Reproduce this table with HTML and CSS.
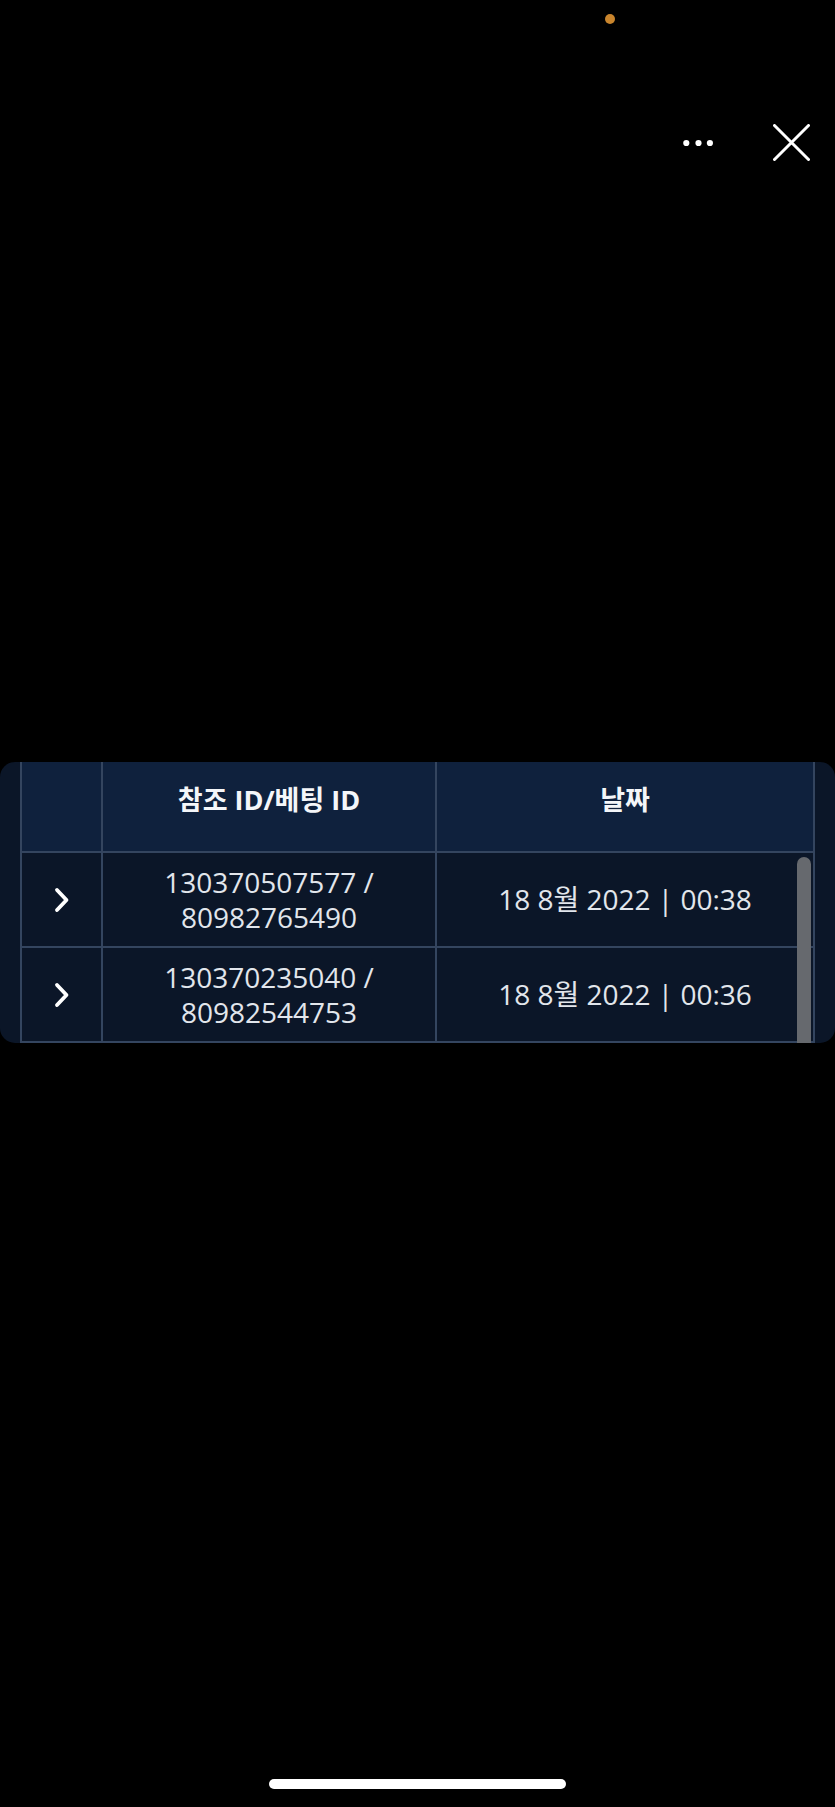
FILE: index.html
```html
<!DOCTYPE html>
<html lang="ko">
<head>
<meta charset="utf-8">
<title>베팅 내역</title>
<link rel="stylesheet" href="styles.css">
</head>
<body>
<div class="page">
  <div class="statusbar"><span class="rec-dot"></span></div>
  <div class="toolbar">
    <svg class="more" width="36" height="10" viewBox="0 0 36 10">
      <circle cx="6.3" cy="5" r="3.1" fill="#fff"/>
      <circle cx="18.5" cy="5" r="3.1" fill="#fff"/>
      <circle cx="29.9" cy="5" r="3.1" fill="#fff"/>
    </svg>
    <svg class="close" width="37" height="37" viewBox="0 0 37 37">
      <path d="M1.5 1.5 L35.5 35.5 M35.5 1.5 L1.5 35.5" stroke="#fff" stroke-width="3" stroke-linecap="round" fill="none"/>
    </svg>
  </div>

  <div class="panel">
    <div class="grid">
      <div class="cell head first"></div>
      <div class="cell head">참조 ID/베팅 ID</div>
      <div class="cell head last">날짜</div>

      <div class="cell first"><svg class="chev" width="16" height="26" viewBox="0 0 16 26"><path d="M3 3 L12.5 13 L3 23" stroke="#fff" stroke-width="3.8" stroke-linecap="round" stroke-linejoin="round" fill="none"/></svg></div>
      <div class="cell">130370507577 /<br>80982765490</div>
      <div class="cell last">18 8월 2022 | 00:38</div>

      <div class="cell first"><svg class="chev" width="16" height="26" viewBox="0 0 16 26"><path d="M3 3 L12.5 13 L3 23" stroke="#fff" stroke-width="3.8" stroke-linecap="round" stroke-linejoin="round" fill="none"/></svg></div>
      <div class="cell">130370235040 /<br>80982544753</div>
      <div class="cell last">18 8월 2022 | 00:36</div>
    </div>
    <div class="scrollbar"></div>
  </div>

  <div class="home-indicator"></div>
</div>
</body>
</html>
```

FILE: styles.css
```css
html, body {
  margin: 0;
  padding: 0;
  background: #000;
}

.page {
  width: 835px;
  height: 1807px;
  overflow: hidden;
  display: flex;
  flex-direction: column;
  font-family: "Open Sans", "Noto Sans CJK KR", sans-serif;
}

.statusbar {
  height: 38px;
  padding-left: 605px;
  box-sizing: border-box;
}

.rec-dot {
  display: block;
  width: 10px;
  height: 10px;
  margin-top: 14px;
  border-radius: 50%;
  background: #c9852d;
}

.toolbar {
  display: flex;
  justify-content: flex-end;
  align-items: center;
  gap: 57px;
  padding-top: 86px;
  padding-right: 25px;
  height: 37px;
}

.more { display: block; margin-top: 1px; }
.close { display: block; }

.panel {
  position: relative;
  margin-top: 601px;
  width: 835px;
  background: #0b1628;
  border-radius: 15px;
  padding-left: 20px;
  box-sizing: border-box;
  overflow: hidden;
}

.grid {
  display: grid;
  grid-template-columns: 81px 334px 380px;
}

.cell {
  border-left: 2px solid #34455f;
  border-bottom: 2px solid #34455f;
  background: #0b1628;
  color: #e2e6ec;
  font-size: 28px;
  line-height: 35px;
  height: 93px;
  display: flex;
  align-items: center;
  justify-content: center;
  text-align: center;
  box-sizing: content-box;
}

.cell.last {
  border-right: 2px solid #34455f;
}

.cell.head {
  background: #0f213d;
  color: #f4f6f9;
  font-weight: 700;
  font-size: 27px;
  height: 75px;
  padding-bottom: 14px;
}

.chev { display: block; }

.scrollbar {
  position: absolute;
  left: 797px;
  top: 95px;
  width: 14px;
  height: 200px;
  border-radius: 7px;
  background: #66696e;
}

.home-indicator {
  margin: 736px auto 0;
  width: 297px;
  height: 10px;
  border-radius: 5px;
  background: #fff;
}
```
